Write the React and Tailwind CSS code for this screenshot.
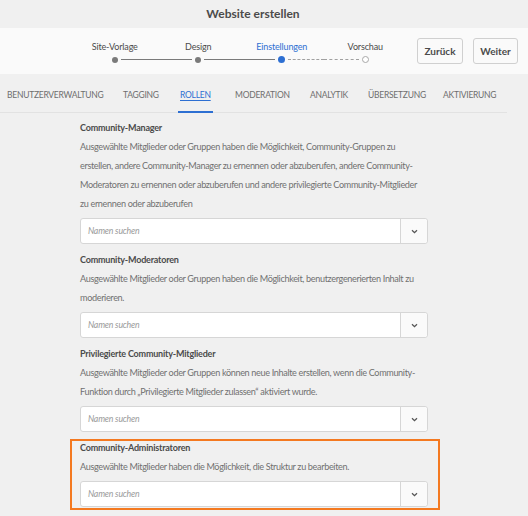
import React from "react";

const font = { fontFamily: 'Lato, "Liberation Sans", Arial, sans-serif' };

const steps = [
  { label: "Site-Vorlage", state: "done" },
  { label: "Design", state: "done" },
  { label: "Einstellungen", state: "current" },
  { label: "Vorschau", state: "todo" },
];

const tabs = [
  { label: "BENUTZERVERWALTUNG", w: "w-[116px]" },
  { label: "TAGGING", w: "w-[57px]" },
  { label: "ROLLEN", w: "w-[55px]", active: true },
  { label: "MODERATION", w: "w-[75px]" },
  { label: "ANALYTIK", w: "w-[58px]" },
  { label: "ÜBERSETZUNG", w: "w-[75px]" },
  { label: "AKTIVIERUNG", w: "w-[64px]" },
];

const sections = [
  {
    title: "Community-Manager",
    lines: [
      "Ausgewählte Mitglieder oder Gruppen haben die Möglichkeit, Community-Gruppen zu",
      "erstellen, andere Community-Manager zu ernennen oder abzuberufen, andere Community-",
      "Moderatoren zu ernennen oder abzuberufen und andere privilegierte Community-Mitglieder",
      "zu ernennen oder abzuberufen",
    ],
  },
  {
    title: "Community-Moderatoren",
    lines: [
      "Ausgewählte Mitglieder oder Gruppen haben die Möglichkeit, benutzergenerierten Inhalt zu",
      "moderieren.",
    ],
  },
  {
    title: "Privilegierte Community-Mitglieder",
    lines: [
      "Ausgewählte Mitglieder oder Gruppen können neue Inhalte erstellen, wenn die Community-",
      "Funktion durch „Privilegierte Mitglieder zulassen“ aktiviert wurde.",
    ],
  },
  {
    title: "Community-Administratoren",
    lines: ["Ausgewählte Mitglieder haben die Möglichkeit, die Struktur zu bearbeiten."],
    highlight: true,
  },
];

function Dot({ state }) {
  if (state === "current") return <span className="w-[7px] h-[7px] rounded-full bg-[#2d6fd2] shrink-0" />;
  if (state === "todo") return <span className="w-[7px] h-[7px] rounded-full border border-[#a8a8a8] bg-white shrink-0" />;
  return <span className="w-[6px] h-[6px] rounded-full bg-[#7a7a7a] shrink-0" />;
}

function Stepper() {
  return (
    <div className="flex">
      {steps.map((s, i) => {
        const leftDashed = i === 3;
        const rightDashed = i === 2;
        return (
          <div key={s.label} className="w-[83.5px] flex flex-col items-center">
            <span className={`text-[9px] leading-[14px] tracking-[-0.15px] ${s.state === "current" ? "text-[#2d6fd2]" : "text-[#4b4b4b]"}`}>
              {s.label}
            </span>
            <div className="w-full flex items-center h-[10px] mt-[1px]">
              <span className={`flex-1 mr-[3px] ${i === 0 ? "" : leftDashed ? "border-t border-dashed border-[#a0a0a0]" : "h-[1.5px] bg-[#7a7a7a]"}`} />
              <Dot state={s.state} />
              <span className={`flex-1 ml-[3px] ${i === 3 ? "" : rightDashed ? "border-t border-dashed border-[#a0a0a0]" : "h-[1.5px] bg-[#7a7a7a]"}`} />
            </div>
          </div>
        );
      })}
    </div>
  );
}

function SearchField() {
  return (
    <div className="mt-[5px] h-[26px] flex bg-white border border-[#d6d6d6] rounded-[3px]">
      <div className="flex-1 flex items-center pl-[7px] text-[8.75px] tracking-[-0.2px] italic text-[#9a9a9a]">Namen suchen</div>
      <div className="w-[27px] border-l border-[#d6d6d6] bg-[#fafafa] rounded-r-[3px] flex items-center justify-center">
        <svg width="7" height="5" viewBox="0 0 7 5">
          <path d="M1 1.2 L3.5 3.6 L6 1.2" fill="none" stroke="#555" strokeWidth="1.3" />
        </svg>
      </div>
    </div>
  );
}

export default function App() {
  return (
    <div className="w-[528px] h-[516px] bg-[#f0f0f0] overflow-hidden" style={font}>
      <div className="h-[28px] flex items-center justify-center pr-[22px] text-[12px] font-bold text-[#4b4b4b]">
        Website erstellen
      </div>
      <div className="h-[46px] bg-[#fafafa] flex items-center">
        <div className="pl-[73px] pt-[2px]">
          <Stepper />
        </div>
        <div className="ml-auto mr-[10px] flex gap-[10px]">
          <button className="w-[46px] h-[26px] border border-[#d0d0d0] rounded-[3px] bg-[#fafafa] text-[10px] font-bold text-[#4b4b4b]">
            Zurück
          </button>
          <button className="w-[45px] h-[26px] border border-[#d0d0d0] rounded-[3px] bg-[#fafafa] text-[10px] font-bold text-[#4b4b4b]">
            Weiter
          </button>
        </div>
      </div>
      <div className="w-[507px] h-[39px] flex pl-[7px] pt-[4px] border-b border-[#e2e2e2]">
        {tabs.map((t) => (
          <div key={t.label} className={`${t.w} shrink-0 relative flex items-center`}>
            <span className={`text-[8.5px] tracking-[-0.25px] whitespace-nowrap ${t.active ? "text-[#2d6fd2] underline underline-offset-2" : "text-[#6e6e6e]"}`}>
              {t.label}
            </span>
            {t.active && <span className="absolute left-[-2px] w-[35px] bottom-[-1px] h-[2.5px] bg-[#2d6fd2]" />}
          </div>
        ))}
      </div>
      <div className="pl-[80px] w-[428px] pt-[5px] flex flex-col gap-[6px]">
        {sections.map((s) => (
          <div key={s.title} className="relative">
            <div className="text-[9px] leading-[19px] font-bold tracking-[-0.2px] text-[#4b4b4b]">{s.title}</div>
            {s.lines.map((l) => (
              <div key={l} className="text-[9.1px] leading-[19px] tracking-[-0.35px] text-[#707070] whitespace-nowrap">
                {l}
              </div>
            ))}
            <SearchField />
            {s.highlight && (
              <div className="absolute left-[-10px] top-[1px] w-[370px] h-[71px] border-2 border-[#f47920] pointer-events-none" />
            )}
          </div>
        ))}
      </div>
    </div>
  );
}
